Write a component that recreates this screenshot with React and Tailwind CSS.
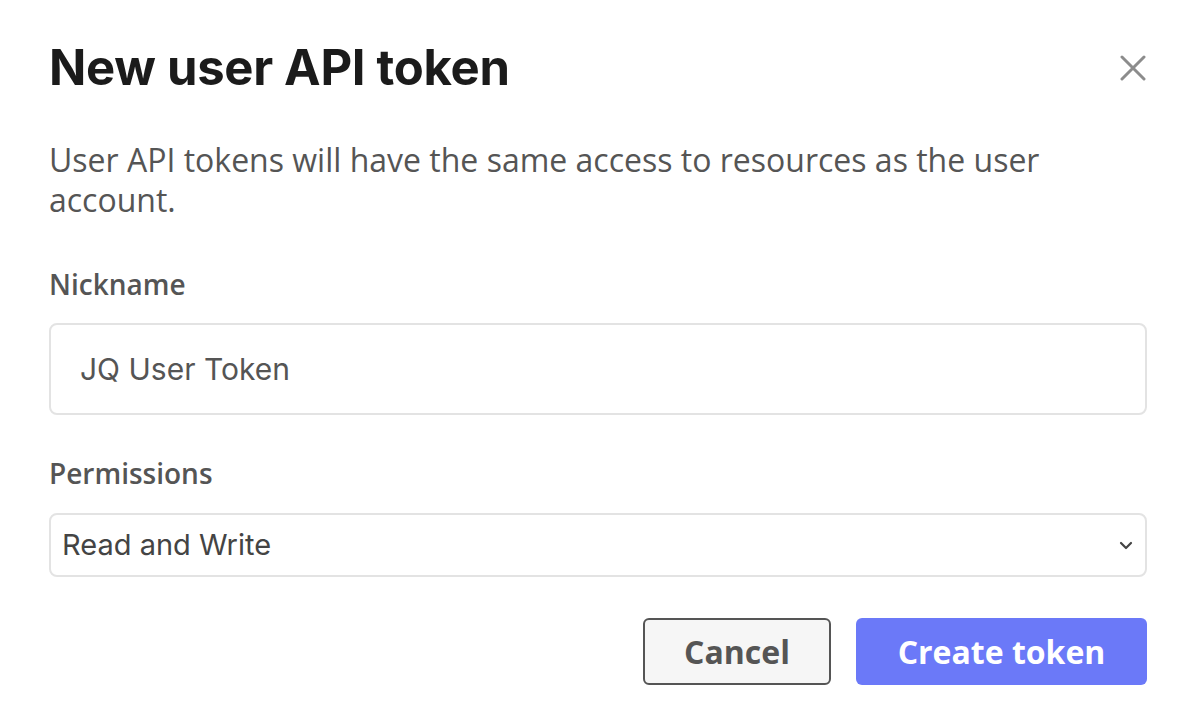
import React from 'react'

const body = { fontFamily: '"Open Sans", "Noto Sans", sans-serif' }
const sys = { fontFamily: 'Inter, "Liberation Sans", sans-serif' }

const CloseIcon = () => (
  <svg width="26" height="26" viewBox="0 0 26 26" fill="none" stroke="#8c8c8c" strokeWidth="3" strokeLinecap="round">
    <path d="M2 2 L24 24 M24 2 L2 24" />
  </svg>
)

const Chevron = () => (
  <svg width="14" height="9" viewBox="0 0 14 9" fill="none" stroke="#444" strokeWidth="2.2" strokeLinecap="round" strokeLinejoin="round">
    <path d="M2 2 L7 7 L12 2" />
  </svg>
)

export default function App() {
  return (
    <div className="w-[1190px] h-[718px] bg-white pl-[49px] pr-[43px] pt-[40px] text-[#555]" style={body}>
      <div className="flex items-center justify-between pr-[1px]">
        <h1
          className="text-[49px] leading-[56px] font-bold text-[#1b1b1b] tracking-[-0.3px]"
          style={{ fontFamily: 'Inter, "Liberation Sans", sans-serif' }}
        >
          New user API token
        </h1>
        <button className="w-[26px] h-[26px] flex items-center justify-center">
          <CloseIcon />
        </button>
      </div>

      <p className="mt-[44px] text-[32px] leading-[40px] text-[#555] pr-[60px]">
        User API tokens will have the same access to resources as the user account.
      </p>

      <label className="block mt-[46px] text-[28px] leading-[36px] font-semibold text-[#555]">Nickname</label>
      <div className="mt-[21px] h-[92px] border-2 border-[#e3e3e3] rounded-[8px] flex items-center px-[29px]">
        <span className="text-[30px] text-[#555]" style={sys}>JQ User Token</span>
      </div>

      <label className="block mt-[40px] text-[28px] leading-[36px] font-semibold text-[#555]">Permissions</label>
      <div className="mt-[22px] h-[64px] border-2 border-[#e3e3e3] rounded-[8px] flex items-center justify-between pl-[11px] pr-[12px]">
        <span className="text-[29px] text-[#444]" style={sys}>Read and Write</span>
        <Chevron />
      </div>

      <div className="mt-[41px] flex justify-end gap-[25px]">
        <button className="w-[188px] h-[67px] rounded-[6px] border-2 border-[#555] bg-[#f6f6f6] text-[32px] font-bold text-[#555]">
          Cancel
        </button>
        <button className="w-[291px] h-[67px] rounded-[6px] bg-[#6b79f8] text-[32px] font-bold text-white">
          Create token
        </button>
      </div>
    </div>
  )
}
